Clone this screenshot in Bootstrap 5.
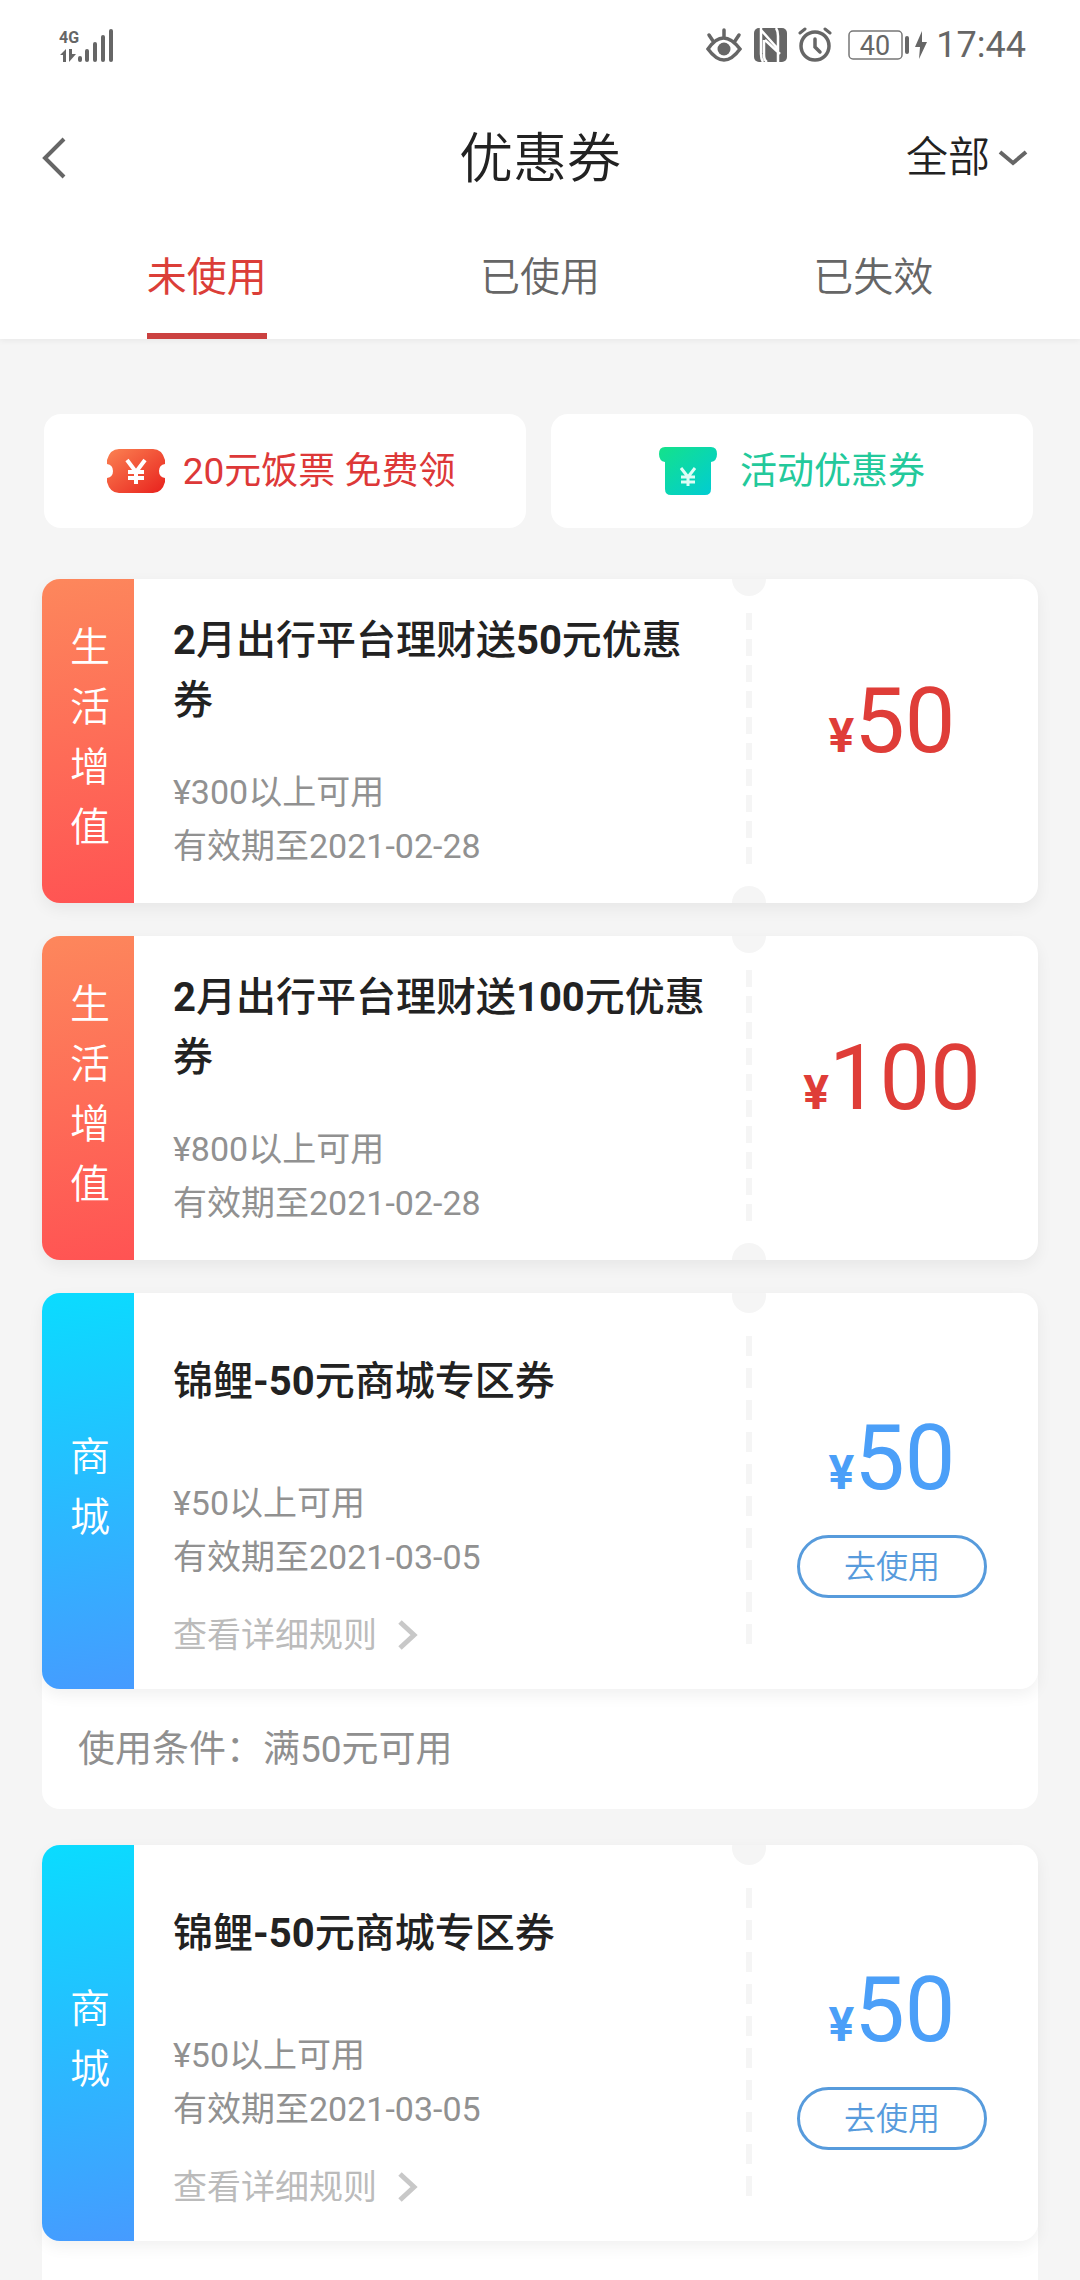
<!DOCTYPE html>
<html lang="zh-CN">
<head>
<meta charset="utf-8">
<meta name="viewport" content="width=device-width, initial-scale=1">
<title>优惠券</title>
<link href="https://cdn.jsdelivr.net/npm/bootstrap@5.3.0/dist/css/bootstrap.min.css" rel="stylesheet">
<style>
  body { background: #f5f5f5; color: #222; font-family: Roboto, "Noto Sans CJK SC", sans-serif; font-size: 34px; line-height: 54px; overflow-x: hidden; }
  svg { display: block; flex: none; }
  .page-head { box-shadow: 0 2px 6px rgba(0,0,0,.05); }
  .status-bar { height: 90px; padding: 0 54px 0 58px; color: #666; }
  .status-time { font-size: 36px; }
  .title-bar { height: 132px; padding: 0 40px; }
  .title-bar h1 { font-size: 54px; font-weight: 350; line-height: 80px; padding-top: 8px; }
  .side-slot { flex: 1 1 0; }
  .filter-btn { font-size: 42px; font-weight: 350; line-height: 60px; color: #222; margin: 4px 12px 0 0; }
  .tab-row { padding: 0 40px; height: 117px; }
  .tab-row .nav-link { font-size: 40px; font-weight: 350; line-height: 60px; color: #666; padding: 26px 0 25px; border-radius: 0; border-bottom: 6px solid transparent; width: 120px; }
  .tab-row .nav-link.active { color: #db3e38; font-weight: 400; border-bottom-color: #cb4140; }
  .page-body { padding: 75px 42px 0; }
  .promo-row { gap: 25px; padding: 0 5px 0 2px; margin-bottom: 51px; }
  .promo { height: 114px; border-radius: 17px; gap: 18px; font-size: 37px; }
  .promo-red { color: #dd3838; padding-right: 8px; }
  .promo-green { color: #23c99b; gap: 23px; }
  .promo span { padding-top: 2px; }
  .coupon { border-radius: 18px; min-height: 324px; box-shadow: 0 6px 16px rgba(0,0,0,.06); position: relative; z-index: 1; }
  .coupon-tall { min-height: 396px; }
  .coupon-kind { flex: none; width: 92px; border-radius: 18px 0 0 18px; color: #fff; font-size: 40px; font-weight: 350; line-height: 60px; padding: 0 24px 6px 28px; }
  .kind-life { background: linear-gradient(170deg, #fd875c, #ff5353); }
  .kind-mall { background: linear-gradient(170deg, #0adcff, #469bff); }
  .coupon-info { flex: 1 1 0; min-width: 0; padding: 2px 17px 0 39px; }
  .coupon-name { font-size: 40px; font-weight: 500; line-height: 60px; min-height: 120px; margin-bottom: 34px; }
  .coupon-name b { font-weight: 700; }
  .coupon-meta { color: #919191; }
  .rule-link { color: #bbb; margin-top: 24px; gap: 20px; }
  .tear { flex: none; width: 34px; padding: 34px 14px 38px; position: relative; overflow: hidden; }
  .tear::before, .tear::after { content: ""; position: absolute; left: 0; width: 34px; height: 34px; border-radius: 50%; background: #f5f5f5; }
  .tear::before { top: -17px; }
  .tear::after { bottom: -17px; }
  .tear-dash { background: repeating-linear-gradient(#f5f5f5 0 17px, #fff 17px 26px); }
  .coupon-tall .tear { padding: 43px 14px 45px; }
  .coupon-tall .tear::before { top: -14px; }
  .coupon-tall .tear::after { display: none; }
  .coupon-tall .tear-dash { background: repeating-linear-gradient(#f5f5f5 0 20px, #fff 20px 32px); }
  .coupon-price { flex: none; width: 272px; padding: 0 20px 24px 0; gap: 12px; }
  .coupon-tall .coupon-price { padding: 25px 20px 0 0; }
  .amount { font-size: 90px; line-height: 100px; white-space: nowrap; }
  .amount b { font-size: 48px; font-weight: 700; }
  .amount-red { color: #df3d38; }
  .amount-blue { color: #4b9ff8; }
  .use-btn { width: 190px; height: 63px; border: 3px solid #579bdc; border-radius: 32px; color: #579bdc; font-size: 32px; font-weight: 350; line-height: 48px; }
  .rule-panel { background: #fff; border-radius: 0 0 18px 18px; color: #8f8f8f; font-size: 37px; line-height: 38px; padding: 60px 36px 40px; margin-top: -18px; }
  .stack-gap { margin-bottom: 33px; }
  .group-gap { margin-bottom: 36px; }
</style>
</head>
<body>
<header class="page-head bg-white">
  <div class="status-bar d-flex align-items-center justify-content-between">
    <svg width="56" height="38" viewBox="0 0 56 38" fill="#666" role="img" aria-label="4G">
      <text x="1" y="17" font-size="16" font-weight="700">4G</text>
      <path d="M2 29l6-6v13H5v-7zM11 23h3v5h4l-7 8z"/>
      <rect x="20" y="30" width="4" height="6" rx="2"/><rect x="27" y="23" width="4" height="13" rx="2"/><rect x="35" y="16" width="4" height="20" rx="2"/><rect x="43" y="9" width="4" height="27" rx="2"/><rect x="51" y="3" width="4" height="33" rx="2"/>
    </svg>
    <div class="d-flex align-items-center">
      <svg class="me-2" width="40" height="36" viewBox="0 0 40 36" fill="none" stroke="#666" stroke-width="4" stroke-linecap="round"><path d="M4 22q15-22 32 0q-16 22-32 0zM20 3v7M5 8l4 6M35 8l-4 6" stroke-width="3.500"/><circle cx="20" cy="22" r="6.500" fill="#666" stroke="none"/></svg>
      <svg class="me-2" width="38" height="36" viewBox="0 0 38 36"><rect x="2" y="1" width="33" height="34" rx="5" fill="#666"/><path d="M11 35q-2-3-2-8V1M9 3l17 19M12 13v15q0 5 3 7M26 35V9q0-5-2-8M13 13l15 14" fill="none" stroke="#fff" stroke-width="2.500"/></svg>
      <svg class="me-3" width="34" height="36" viewBox="0 0 34 36" fill="none" stroke="#666" stroke-linecap="round"><circle cx="17" cy="19" r="14" stroke-width="3.500"/><path d="M17 12v8l5 5" stroke-width="3.500"/><path d="M2 6l5-4M32 6l-5-4" stroke-width="3"/></svg>
      <svg class="me-1" width="62" height="32" viewBox="0 0 62 32" role="img" aria-label="40"><rect x="1" y="2" width="53" height="28" rx="4" fill="none" stroke="#777" stroke-width="1.500"/><rect x="57" y="7" width="4" height="18" rx="2" fill="#666"/><text x="27" y="26" font-size="27" text-anchor="middle" fill="#666">40</text></svg>
      <svg class="me-2" width="14" height="28" viewBox="0 0 14 28"><path d="M8 0L1 16h5l-1 12 8-17H8z" fill="#666"/></svg>
      <span class="status-time">17:44</span>
    </div>
  </div>
  <div class="title-bar d-flex align-items-center">
    <div class="side-slot"><button type="button" class="btn p-0 border-0" aria-label="返回"><svg width="28" height="44" viewBox="0 0 28 44" fill="none" stroke="#666" stroke-width="4"><path d="M24 2L5 21l19 19"/></svg></button></div>
    <h1 class="mb-0">优惠券</h1>
    <div class="side-slot d-flex justify-content-end"><button type="button" class="btn filter-btn p-0 border-0 d-flex align-items-center gap-2">全部<svg width="30" height="18" viewBox="0 0 30 18" fill="none" stroke="#666" stroke-width="4"><path d="M2 3l13 11L28 3"/></svg></button></div>
  </div>
  <nav class="tab-row nav">
    <div class="nav-item flex-fill d-flex justify-content-center"><a class="nav-link text-center active" aria-current="page" href="#">未使用</a></div>
    <div class="nav-item flex-fill d-flex justify-content-center"><a class="nav-link text-center" href="#">已使用</a></div>
    <div class="nav-item flex-fill d-flex justify-content-center"><a class="nav-link text-center" href="#">已失效</a></div>
  </nav>
</header>

<main class="page-body">
  <div class="promo-row d-flex">
    <a href="#" class="promo promo-red bg-white flex-fill w-50 d-flex align-items-center justify-content-center text-decoration-none">
      <svg width="58" height="46" viewBox="0 0 58 46"><defs><linearGradient id="gr" x1="0" y1="0" x2="1" y2="1"><stop offset="0" stop-color="#fb8252"/><stop offset="1" stop-color="#e8211d"/></linearGradient></defs><path d="M12 1h34q9 0 12 11v4q-6 1-6 7t6 7v4q-3 11-12 11H12q-9 0-12-11v-4q6-1 6-7t-6-7v-4q3-11 12-11z" fill="url(#gr)"/><path d="M20 12l9 12 9-12M29 23v13M21 24h16M21 30h16" fill="none" stroke="#fff" stroke-width="4"/></svg>
      <span>20元饭票 免费领</span>
    </a>
    <a href="#" class="promo promo-green bg-white flex-fill w-50 d-flex align-items-center justify-content-center text-decoration-none">
      <svg width="58" height="48" viewBox="0 0 58 48"><defs><linearGradient id="gg" x1="0" y1="0" x2="1" y2="1"><stop offset="0" stop-color="#14e28a"/><stop offset="1" stop-color="#00cbd6"/></linearGradient></defs><path d="M6 0h46q6 0 6 7t-6 8v27q0 6-6 6H12q-6 0-6-6V15q-6-1-6-8t6-7z" fill="url(#gg)"/><path d="M22 21l7 9 7-9M29 29v10M22 30h14M22 35h14" fill="none" stroke="#dffdf6" stroke-width="3"/></svg>
      <span>活动优惠券</span>
    </a>
  </div>

  <article class="coupon stack-gap bg-white d-flex">
    <div class="coupon-kind kind-life d-flex align-items-center"><span class="text-break">生活增值</span></div>
    <div class="coupon-info d-flex flex-column justify-content-center">
      <h2 class="coupon-name d-flex align-items-center"><span><b>2</b>月出行平台理财送<b>50</b>元优惠券</span></h2>
      <div class="coupon-meta">¥300以上可用</div>
      <div class="coupon-meta">有效期至2021-02-28</div>
    </div>
    <div class="tear d-flex"><div class="tear-dash flex-fill"></div></div>
    <div class="coupon-price d-flex flex-column align-items-center justify-content-center"><div class="amount amount-red"><b>¥</b>50</div></div>
  </article>

  <article class="coupon stack-gap bg-white d-flex">
    <div class="coupon-kind kind-life d-flex align-items-center"><span class="text-break">生活增值</span></div>
    <div class="coupon-info d-flex flex-column justify-content-center">
      <h2 class="coupon-name d-flex align-items-center"><span><b>2</b>月出行平台理财送<b>100</b>元优惠券</span></h2>
      <div class="coupon-meta">¥800以上可用</div>
      <div class="coupon-meta">有效期至2021-02-28</div>
    </div>
    <div class="tear d-flex"><div class="tear-dash flex-fill"></div></div>
    <div class="coupon-price d-flex flex-column align-items-center justify-content-center"><div class="amount amount-red"><b>¥</b>100</div></div>
  </article>

  <section class="group-gap">
    <article class="coupon coupon-tall bg-white d-flex">
      <div class="coupon-kind kind-mall d-flex align-items-center"><span class="text-break">商城</span></div>
      <div class="coupon-info d-flex flex-column justify-content-center">
        <h2 class="coupon-name d-flex align-items-center"><span>锦鲤<b>-50</b>元商城专区券</span></h2>
        <div class="coupon-meta">¥50以上可用</div>
        <div class="coupon-meta">有效期至2021-03-05</div>
        <a href="#" class="rule-link d-flex align-items-center text-decoration-none">查看详细规则<svg width="22" height="30" viewBox="0 0 22 30" fill="none" stroke="#c8c8c8" stroke-width="5"><path d="M3 2l14 13L3 28"/></svg></a>
      </div>
      <div class="tear d-flex"><div class="tear-dash flex-fill"></div></div>
      <div class="coupon-price d-flex flex-column align-items-center justify-content-center"><div class="amount amount-blue"><b>¥</b>50</div><button type="button" class="use-btn btn p-0">去使用</button></div>
    </article>
    <div class="rule-panel">使用条件：满50元可用</div>
  </section>

  <section>
    <article class="coupon coupon-tall bg-white d-flex">
      <div class="coupon-kind kind-mall d-flex align-items-center"><span class="text-break">商城</span></div>
      <div class="coupon-info d-flex flex-column justify-content-center">
        <h2 class="coupon-name d-flex align-items-center"><span>锦鲤<b>-50</b>元商城专区券</span></h2>
        <div class="coupon-meta">¥50以上可用</div>
        <div class="coupon-meta">有效期至2021-03-05</div>
        <a href="#" class="rule-link d-flex align-items-center text-decoration-none">查看详细规则<svg width="22" height="30" viewBox="0 0 22 30" fill="none" stroke="#c8c8c8" stroke-width="5"><path d="M3 2l14 13L3 28"/></svg></a>
      </div>
      <div class="tear d-flex"><div class="tear-dash flex-fill"></div></div>
      <div class="coupon-price d-flex flex-column align-items-center justify-content-center"><div class="amount amount-blue"><b>¥</b>50</div><button type="button" class="use-btn btn p-0">去使用</button></div>
    </article>
    <div class="rule-panel">&nbsp;</div>
  </section>
</main>
<script src="https://cdn.jsdelivr.net/npm/bootstrap@5.3.0/dist/js/bootstrap.bundle.min.js"></script>
</body>
</html>
